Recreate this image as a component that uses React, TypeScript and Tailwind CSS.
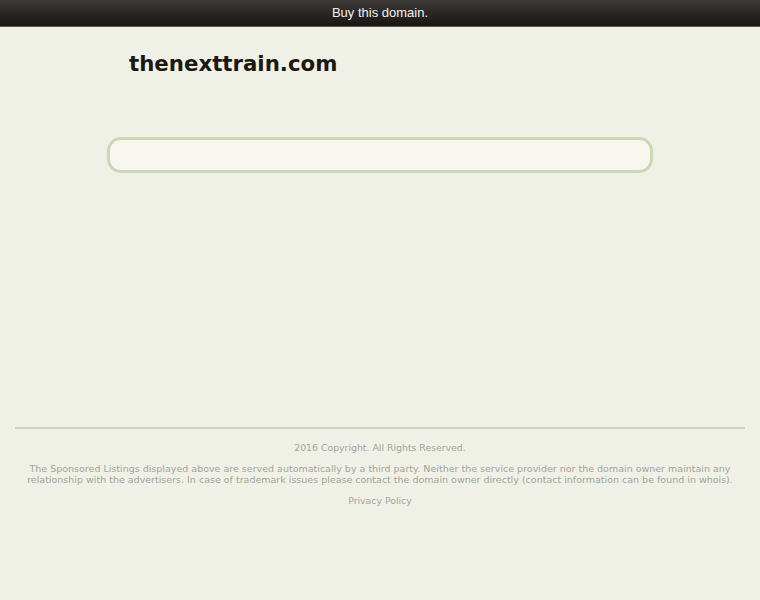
export default function App() {
  return (
    <div className="min-h-[600px] bg-[#f0f1e6] font-['DejaVu_Sans',sans-serif]">
      {/* top bar */}
      <div className="h-[27px] flex items-center justify-center bg-gradient-to-b from-[#3d3a38] to-[#181513] border-b border-[#5a5854]">
        <a className="text-[13px] text-[#f2f2f2] font-['Liberation_Sans',Arial,sans-serif]">Buy this domain.</a>
      </div>

      {/* header */}
      <div className="w-[546px] mx-auto pt-[23px]">
        <h1 className="pl-[22px] text-[21.3px] leading-[28px] font-bold text-[#1d1712]">thenexttrain.com</h1>
      </div>

      {/* search */}
      <div className="w-[546px] mx-auto mt-[59px]">
        <div className="h-[36px] rounded-[14px] border-[3px] border-[#cfd8b4] bg-[#f7f7f0]" />
      </div>

      {/* footer */}
      <div className="mx-[15px] mt-[254px] border-t-2 border-[#d0d0ca] pt-[13px] text-center text-[9.33px] text-[#a3a39c]">
        <p className="leading-[12px]">2016 Copyright. All Rights Reserved.</p>
        <p className="mt-[9px] leading-[11px] px-[8px] text-[9.5px]">
          The Sponsored Listings displayed above are served automatically by a third party. Neither the service provider nor the domain owner maintain any relationship with the advertisers. In case of trademark issues please contact the domain owner directly (contact information can be found in whois).
        </p>
        <p className="mt-[10px] leading-[12px]">Privacy Policy</p>
      </div>
    </div>
  )
}
